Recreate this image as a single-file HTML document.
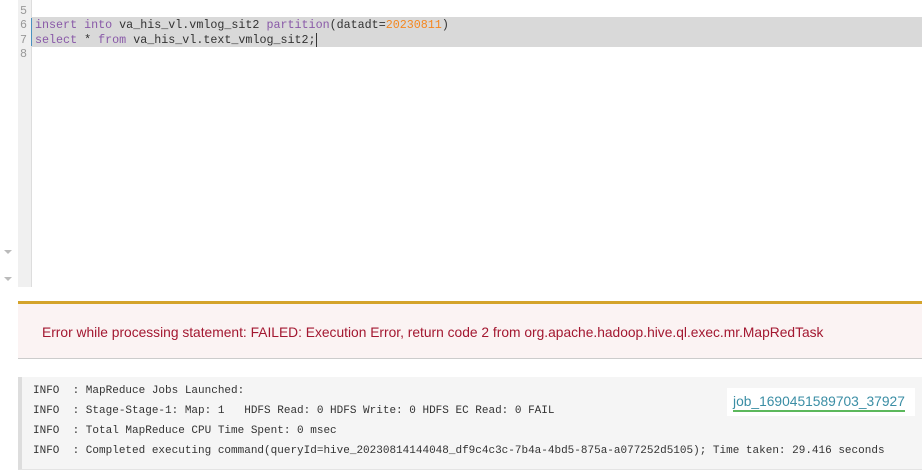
<!DOCTYPE html>
<html><head><meta charset="utf-8"><style>
body{margin:0;width:922px;height:476px;background:#fff;position:relative;overflow:hidden;font-family:"Liberation Sans",sans-serif}
.gut{position:absolute;left:18px;top:0;width:13px;height:287px;background:#f0f0f0;border-right:1px solid #ddd}
.ln{position:absolute;left:20px;font:11.7px "Liberation Mono",monospace;color:#999}
.code{position:absolute;left:35px;font:11.7px "Liberation Mono",monospace;color:#333;white-space:pre}
.sel{position:absolute;left:32px;top:17px;width:890px;height:30px;background:#d9d9d9}
.k{color:#8959a8}.n{color:#f5871f}
.arr{position:absolute;left:4px;width:0;height:0;border-left:4px solid transparent;border-right:4px solid transparent;border-top:4px solid #bbb}
.bar{position:absolute;left:18px;top:301px;width:904px;height:3px;background:#d4a32a}
.err{position:absolute;left:18px;top:304px;width:904px;height:54px;background:#fbf3f3;border-bottom:1px solid #ccc;}
.err span{position:absolute;left:24px;top:21px;font-size:13.8px;color:#a31730}
.log{position:absolute;left:18px;top:377px;width:904px;height:93px;background:#f5f5f5;border-left:4px solid #ddd;box-sizing:border-box;border-bottom:1px solid #e4e4e4}
.log div{position:absolute;left:11px;font:11px "Liberation Mono",monospace;color:#333;white-space:pre}
.job{position:absolute;left:727px;top:388px;width:188px;height:28px;background:#fff}
.job span{position:absolute;left:6px;top:6px;font-size:13.8px;color:#3b8ea5;border-bottom:2px solid #5cb85c;padding-bottom:1px}
</style></head><body>
<div class="gut"></div>
<div class="sel"></div>
<div class="ln" style="top:4px">5</div>
<div class="ln" style="top:18px">6</div>
<div class="ln" style="top:33px">7</div>
<div class="ln" style="top:47px">8</div>
<div style="position:absolute;left:31px;top:18px;width:1px;height:28px;background:#4a90c0"></div>
<div class="code" style="top:18px"><span class="k">insert into</span> va_his_vl.vmlog_sit2 <span class="k">partition</span>(datadt=<span class="n">20230811</span>)</div>
<div class="code" style="top:33px"><span class="k">select</span> * <span class="k">from</span> va_his_vl.text_vmlog_sit2;<span style="border-left:1px solid #333"></span></div>
<div class="arr" style="top:250px"></div>
<div class="arr" style="top:277px"></div>
<div class="bar"></div>
<div class="err"><span>Error while processing statement: FAILED: Execution Error, return code 2 from org.apache.hadoop.hive.ql.exec.mr.MapRedTask</span></div>
<div class="log">
<div style="top:8px">INFO  : MapReduce Jobs Launched:</div>
<div style="top:28px">INFO  : Stage-Stage-1: Map: 1   HDFS Read: 0 HDFS Write: 0 HDFS EC Read: 0 FAIL</div>
<div style="top:48px">INFO  : Total MapReduce CPU Time Spent: 0 msec</div>
<div style="top:68px">INFO  : Completed executing command(queryId=hive_20230814144048_df9c4c3c-7b4a-4bd5-875a-a077252d5105); Time taken: 29.416 seconds</div>
</div>
<div class="job"><span>job_1690451589703_37927</span></div>
</body></html>
